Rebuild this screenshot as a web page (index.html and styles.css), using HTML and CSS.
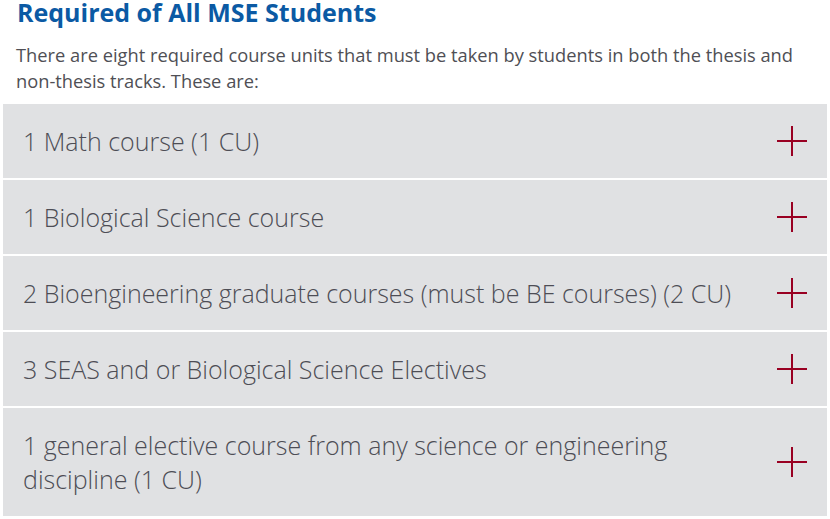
FILE: index.html
```html
<!DOCTYPE html>
<html>
    <head>
        <title>MSE Requirements</title>
        <meta charset="UTF-8">
        <meta name="viewport" content="width=device-width, initial-scale=1.0">
        <link rel="stylesheet" href="styles.css">
    </head>
    <body>
        <div class="intro">
            <h2 class="section-heading">Required of All MSE Students</h2>
            <p class="section-text">
                There are eight required course units that must be taken by students in both the thesis and non-thesis tracks. These are:
            </p>
        </div>
        <div class="accordion">
            <div class="acc-item">
                <span class="acc-title">1 Math course (1 CU)</span>
                <span class="acc-plus"></span>
            </div>
            <div class="acc-item">
                <span class="acc-title">1 Biological Science course</span>
                <span class="acc-plus"></span>
            </div>
            <div class="acc-item">
                <span class="acc-title">2 Bioengineering graduate courses (must be BE courses) (2 CU)</span>
                <span class="acc-plus"></span>
            </div>
            <div class="acc-item">
                <span class="acc-title">3 SEAS and or Biological Science Electives</span>
                <span class="acc-plus"></span>
            </div>
            <div class="acc-item">
                <span class="acc-title">1 general elective course from any science or engineering discipline (1 CU)</span>
                <span class="acc-plus"></span>
            </div>
        </div>
    </body>
</html>
```

FILE: styles.css
```css
* {
  margin: 0;
  padding: 0;
  box-sizing: border-box;
}

body {
  font-family: "Open Sans", sans-serif;
  background-color: #ffffff;
  width: 830px;
  overflow: hidden;
}

.intro {
  padding: 0 16px 0 16px;
}

.section-heading {
  font-size: 25px;
  line-height: 24px;
  font-weight: 700;
  color: #0b5aa4;
  margin-left: 1px;
}

.section-text {
  font-size: 18.3px;
  line-height: 26px;
  color: #4f4f55;
  margin-top: 18px;
  margin-bottom: 10px;
}

.accordion {
  display: flex;
  flex-direction: column;
  gap: 2px;
  padding: 0 3px;
}

.acc-item {
  display: flex;
  align-items: center;
  justify-content: space-between;
  background-color: #e0e1e3;
  padding: 20px 20px 20px 20px;
  min-height: 74px;
}

.acc-title {
  font-size: 25px;
  font-weight: 300;
  line-height: 34px;
  color: #4d4d55;
  max-width: 740px;
}

.acc-plus {
  position: relative;
  width: 30px;
  height: 30px;
  flex-shrink: 0;
}

.acc-plus::before,
.acc-plus::after {
  content: "";
  position: absolute;
  background-color: #990022;
}

.acc-plus::before {
  left: 0;
  right: 0;
  top: 14px;
  height: 2px;
}

.acc-plus::after {
  top: 0;
  bottom: 0;
  left: 14px;
  width: 2px;
}
```
